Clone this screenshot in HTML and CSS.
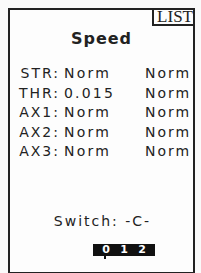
FILE: index.html
```html
<!DOCTYPE html>
<html>

<head>
  <meta charset="UTF-8">
  <title>Speed</title>
  <link rel="stylesheet" href="styles.css">
</head>

<body>
  <div class="screen">
    <div class="screen-top">
      <span class="tab">LIST</span>
    </div>
    <h3 class="title">Speed</h3>
    <div class="rows">
      <span class="label">STR:</span><span class="val">Norm</span><span class="val2">Norm</span>
      <span class="label">THR:</span><span class="val">0.015</span><span class="val2">Norm</span>
      <span class="label">AX1:</span><span class="val">Norm</span><span class="val2">Norm</span>
      <span class="label">AX2:</span><span class="val">Norm</span><span class="val2">Norm</span>
      <span class="label">AX3:</span><span class="val">Norm</span><span class="val2">Norm</span>
    </div>
    <div class="switch">Switch: -C-</div>
    <div class="pos">
      <span class="pos-item pos-item_on">0</span>
      <span class="pos-item">1</span>
      <span class="pos-item">2</span>
    </div>
  </div>
</body>

</html>
```

FILE: styles.css
```css
body {
  margin: 0;
  background-color: #fafafa;
  font-family: "DejaVu Sans", sans-serif;
  color: #222;
}

.screen {
  margin: 8px 0 0 8px;
  width: 183px;
  height: 262px;
  border: 2px solid #222;
  background-color: #fdfdfd;
  display: flex;
  flex-direction: column;
}

.screen-top {
  display: flex;
  justify-content: flex-end;
}

.tab {
  font-family: "Liberation Serif", serif;
  font-size: 17px;
  line-height: 14px;
  padding: 0 0 0 3px;
  border-left: 2px solid #222;
  border-bottom: 2px solid #222;
}

.title {
  margin: 4px 0 0;
  text-align: center;
  font-size: 16px;
  line-height: 18px;
  letter-spacing: 1px;
}

.rows {
  display: grid;
  grid-template-columns: 50px 85px auto;
  margin-top: 16px;
  font-size: 14px;
  line-height: 19.5px;
  letter-spacing: 2px;
  white-space: nowrap;
}

.label {
  text-align: right;
}

.val {
  padding-left: 4px;
  letter-spacing: 2.2px;
}

.switch {
  margin-top: 51px;
  text-align: center;
  font-size: 14px;
  line-height: 16px;
  letter-spacing: 2px;
  padding-left: 2px;
}

.pos {
  align-self: flex-start;
  margin: 15px 0 0 83px;
  display: flex;
  background-color: #111;
  color: #fff;
  font-size: 11px;
  line-height: 12px;
  font-weight: bold;
  padding: 0 4px;
}

.pos-item {
  width: 18px;
  text-align: center;
}

.pos-item_on {
  position: relative;
}

.pos-item_on::after {
  content: "";
  position: absolute;
  left: 7px;
  bottom: -3px;
  width: 2px;
  height: 3px;
  background-color: #111;
}
```
